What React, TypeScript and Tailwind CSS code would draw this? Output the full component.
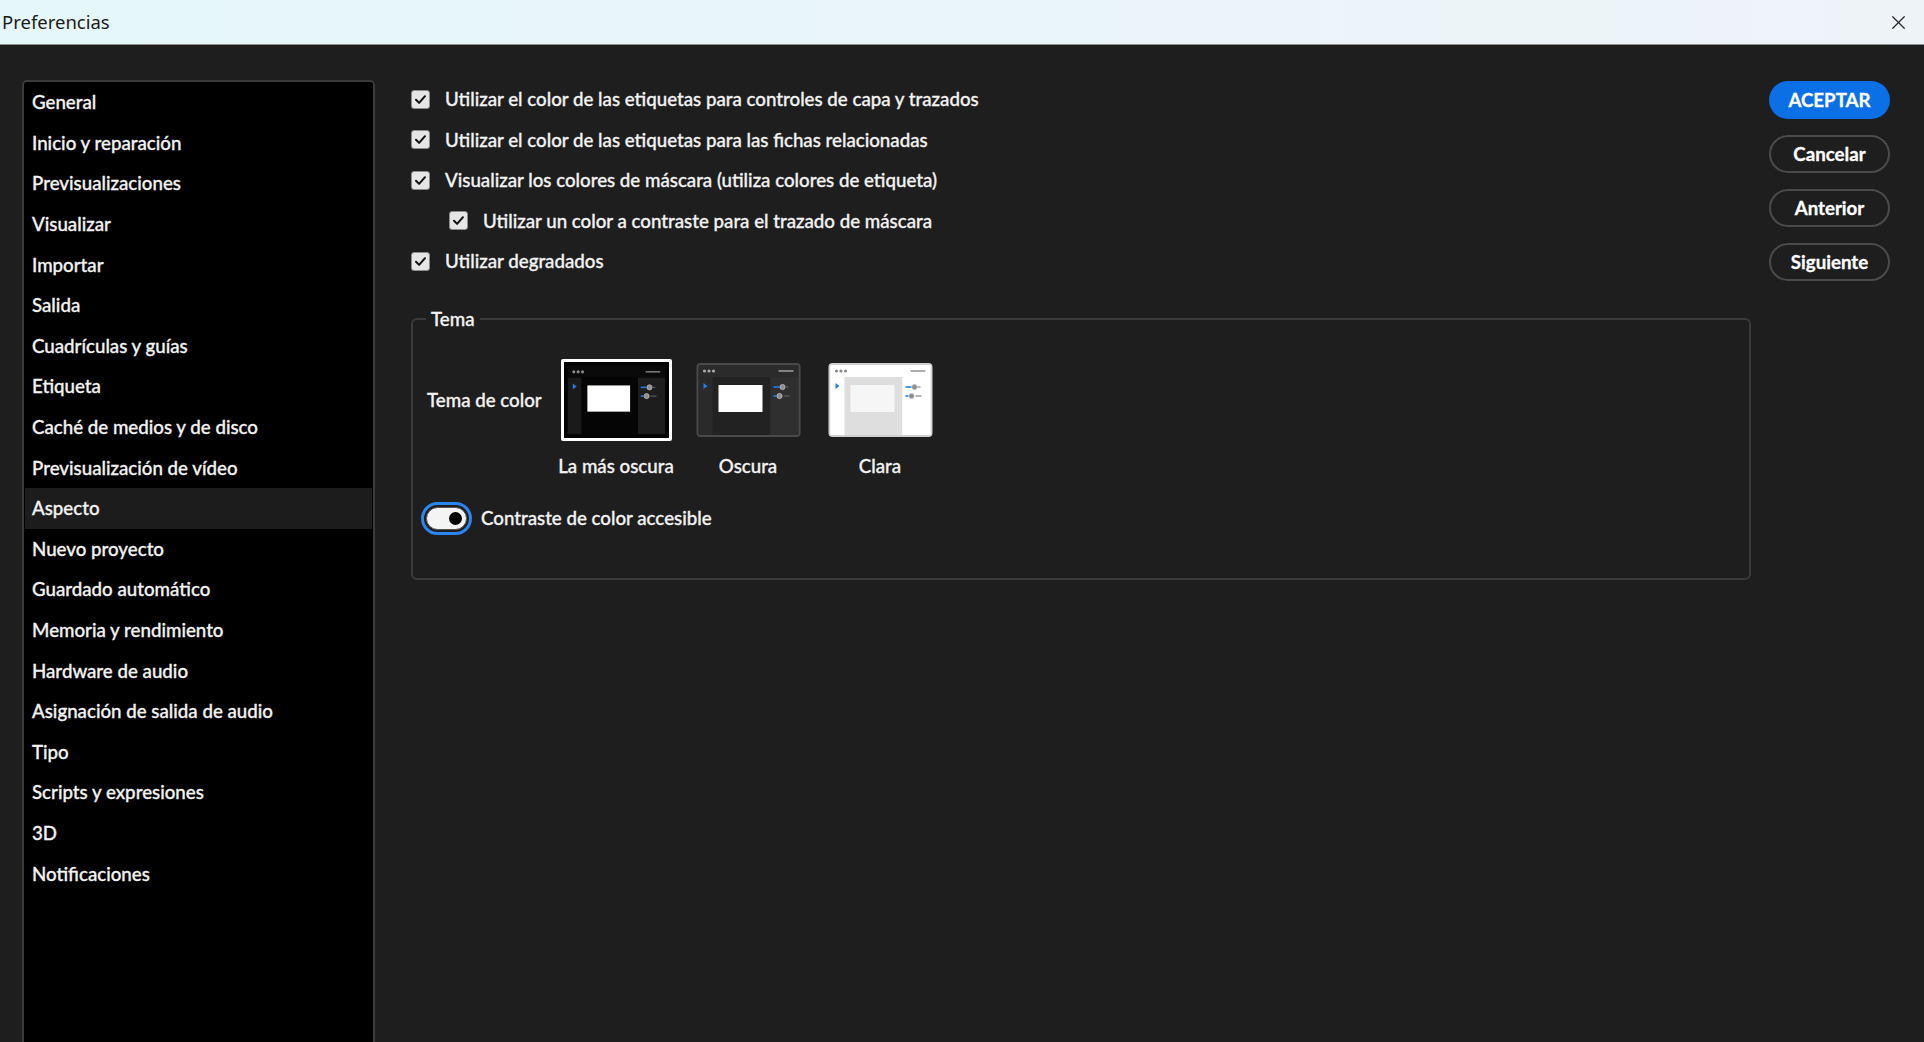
import React from "react";
import { X } from "lucide-react";

const sections = [
  "General",
  "Inicio y reparación",
  "Previsualizaciones",
  "Visualizar",
  "Importar",
  "Salida",
  "Cuadrículas y guías",
  "Etiqueta",
  "Caché de medios y de disco",
  "Previsualización de vídeo",
  "Aspecto",
  "Nuevo proyecto",
  "Guardado automático",
  "Memoria y rendimiento",
  "Hardware de audio",
  "Asignación de salida de audio",
  "Tipo",
  "Scripts y expresiones",
  "3D",
  "Notificaciones",
];

const options = [
  { label: "Utilizar el color de las etiquetas para controles de capa y trazados", indent: false },
  { label: "Utilizar el color de las etiquetas para las fichas relacionadas", indent: false },
  { label: "Visualizar los colores de máscara (utiliza colores de etiqueta)", indent: false },
  { label: "Utilizar un color a contraste para el trazado de máscara", indent: true },
  { label: "Utilizar degradados", indent: false },
];

type Palette = {
  frame: string;
  stroke: string;
  top: string;
  left: string;
  center: string;
  right: string;
  card: string;
  dots: string;
};

const palettes: Record<string, Palette> = {
  darkest: {
    frame: "#050505",
    stroke: "#050505",
    top: "#0a0a0a",
    left: "#1a1a1a",
    center: "#050505",
    right: "#1d1d1d",
    card: "#ffffff",
    dots: "#8a8a8a",
  },
  dark: {
    frame: "#2b2b2b",
    stroke: "#4a4a4a",
    top: "#2b2b2b",
    left: "#2a2a2a",
    center: "#222222",
    right: "#2f2f2f",
    card: "#ffffff",
    dots: "#a8a8a8",
  },
  light: {
    frame: "#ffffff",
    stroke: "#cfcfcf",
    top: "#ffffff",
    left: "#ffffff",
    center: "#dedede",
    right: "#ffffff",
    card: "#f6f6f6",
    dots: "#8c8c8c",
  },
};

// little preview of the app window, one per theme
const ThemeThumb: React.FC<{ p: Palette; w: number; h: number }> = ({ p, w, h }) => (
  <svg width={w} height={h} viewBox="0 0 104 74">
    <rect x="1" y="1" width="102" height="72" rx="3" fill={p.frame} stroke={p.stroke} strokeWidth="2" />
    <rect x="2" y="2" width="100" height="12" fill={p.top} />
    <circle cx="8" cy="8" r="1.6" fill={p.dots} />
    <circle cx="12.5" cy="8" r="1.6" fill={p.dots} />
    <circle cx="17" cy="8" r="1.6" fill={p.dots} />
    <line x1="82" y1="8" x2="97" y2="8" stroke={p.dots} strokeWidth="1.4" />
    <rect x="2" y="14" width="14" height="58" fill={p.left} />
    <rect x="16" y="14" width="58" height="58" fill={p.center} />
    <rect x="74" y="14" width="28" height="58" fill={p.right} />
    <path d="M7 20 L7 26 L11 23 Z" fill="#1f7ef0" />
    <rect x="22" y="22" width="44" height="27" fill={p.card} />
    <line x1="77" y1="24" x2="83" y2="24" stroke="#1f7ef0" strokeWidth="1.6" />
    <circle cx="86" cy="24" r="2.6" fill="#8e8e8e" stroke="#bdbdbd" strokeWidth="0.8" />
    <line x1="89" y1="24" x2="92" y2="24" stroke="#6a6a6a" strokeWidth="1" />
    <line x1="77" y1="33" x2="80" y2="33" stroke="#1f7ef0" strokeWidth="1.6" />
    <circle cx="83" cy="33" r="2.6" fill="#8e8e8e" stroke="#bdbdbd" strokeWidth="0.8" />
    <line x1="87" y1="33" x2="93" y2="33" stroke="#6a6a6a" strokeWidth="1" />
  </svg>
);

const Checkbox: React.FC = () => (
  <span className="w-[19px] h-[19px] shrink-0 rounded-[3px] bg-[#e6e6e6] border border-[#8c8c8c] flex items-center justify-center">
    <svg width="13" height="13" viewBox="0 0 13 13">
      <path d="M2 6.8 L5.1 9.9 L11 3.2" fill="none" stroke="#111" strokeWidth="2" strokeLinecap="round" strokeLinejoin="round" />
    </svg>
  </span>
);

export default function App() {
  return (
    <div
      className="w-[1924px] h-[1042px] bg-[#1e1e1e] flex flex-col overflow-hidden text-[#f3f3f3] text-[18.7px] font-medium [-webkit-text-stroke:0.3px]"
      style={{ fontFamily: "Lato, 'Noto Sans', sans-serif" }}
    >
      {/* Window title bar */}
      <div className="h-[45px] shrink-0 flex items-center justify-between pl-[2px] pr-[14px] bg-gradient-to-r from-[#e5f7f9] to-[#eef3f8] border-b border-[#8e8e8e] [-webkit-text-stroke:0px]">
        <span className="text-[18.5px] font-normal text-[#1b1b1b]" style={{ fontFamily: "'Noto Sans', 'Open Sans', sans-serif" }}>
          Preferencias
        </span>
        <X className="w-[23px] h-[23px] text-[#262626]" strokeWidth={1.3} />
      </div>

      <div className="flex-1 flex min-h-0">
        {/* Section list */}
        <div className="ml-[22px] mt-[35px] w-[353px] shrink-0 bg-black border-2 border-b-0 border-[#3b3b3b] rounded-t-[5px] px-px">
          {sections.map((s) => (
            <div
              key={s}
              className={`h-[40.6px] flex items-center pl-[7px] ${s === "Aspecto" ? "bg-[#1c1c1c]" : ""}`}
            >
              {s}
            </div>
          ))}
        </div>

        {/* Settings */}
        <div className="ml-[36px] mt-[34px] w-[1340px] shrink-0 flex flex-col">
          {options.map((o) => (
            <div key={o.label} className={`h-[40.5px] flex items-center gap-[15px] ${o.indent ? "pl-[38px]" : ""}`}>
              <Checkbox />
              <span>{o.label}</span>
            </div>
          ))}

          <fieldset className="mt-[23px] border-2 border-[#3a3a3a] rounded-[6px] px-[14px] pt-[26px] pb-[43px]">
            <legend className="ml-[-1px] px-[5px]">Tema</legend>
            <div className="flex items-start">
              <div className="w-[123px] h-[82px] flex items-center">Tema de color</div>
              <div className="w-[132px] flex flex-col items-center">
                <div className="h-[82px] flex items-center">
                  <div className="border-[3px] border-white bg-black p-[2px] rounded-[2px]">
                    <ThemeThumb p={palettes.darkest} w={101} h={72} />
                  </div>
                </div>
                <span className="mt-[11px]">La más oscura</span>
              </div>
              <div className="w-[132px] flex flex-col items-center">
                <div className="h-[82px] flex items-center">
                  <ThemeThumb p={palettes.dark} w={105} h={74} />
                </div>
                <span className="mt-[11px]">Oscura</span>
              </div>
              <div className="w-[132px] flex flex-col items-center">
                <div className="h-[82px] flex items-center">
                  <ThemeThumb p={palettes.light} w={105} h={74} />
                </div>
                <span className="mt-[11px]">Clara</span>
              </div>
            </div>

            <div className="mt-[22px] ml-[-6px] flex items-center gap-[9px]">
              <div className="w-[51px] h-[33px] rounded-full border-[3px] border-[#2a86f0] p-[2px]">
                <div className="w-full h-full rounded-full bg-[#f4f4f4] border border-[#555] flex items-center justify-end pr-[4px]">
                  <span className="w-[13px] h-[13px] rounded-full bg-black" />
                </div>
              </div>
              <span>Contraste de color accesible</span>
            </div>
          </fieldset>
        </div>

        {/* Dialog buttons */}
        <div className="ml-[18px] mt-[36px] w-[121px] shrink-0 flex flex-col gap-[16px] font-bold">
          <button className="h-[38px] rounded-full bg-[#0b6fe6] text-white">ACEPTAR</button>
          <button className="h-[38px] rounded-full border-2 border-[#4b4b4b] text-white">Cancelar</button>
          <button className="h-[38px] rounded-full border-2 border-[#4b4b4b] text-white">Anterior</button>
          <button className="h-[38px] rounded-full border-2 border-[#4b4b4b] text-white">Siguiente</button>
        </div>
      </div>
    </div>
  );
}
